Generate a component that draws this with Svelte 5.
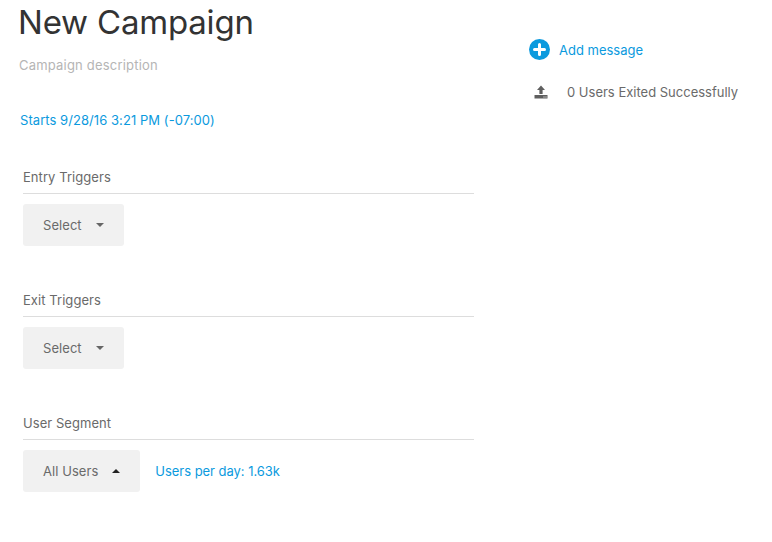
<script>
  let title = 'New Campaign';
  let sections = [
    { label: 'Entry Triggers', value: 'Select', open: false },
    { label: 'Exit Triggers', value: 'Select', open: false }
  ];
</script>

<div class="page">
  <div class="left">
    <h1 class="title">{title}</h1>
    <div class="description">Campaign description</div>
    <a class="starts" href="#top">Starts 9/28/16 3:21 PM (-07:00)</a>

    {#each sections as section}
      <section class="section">
        <div class="section-label">{section.label}</div>
        <div class="row">
          <button class="dropdown">
            {section.value}
            <span class="caret"></span>
          </button>
        </div>
      </section>
    {/each}

    <section class="section">
      <div class="section-label">User Segment</div>
      <div class="row">
        <button class="dropdown">
          All Users
          <span class="caret up"></span>
        </button>
        <a class="users-per-day" href="#top">Users per day: 1.63k</a>
      </div>
    </section>
  </div>

  <div class="right">
    <a class="add-message" href="#top">
      <svg width="21" height="21" viewBox="0 0 21 21">
        <circle cx="10.5" cy="10.5" r="10.5" fill="#0b9ade" />
        <path d="M10.5 5.5v10M5.5 10.5h10" stroke="#fff" stroke-width="3" stroke-linecap="round" />
      </svg>
      Add message
    </a>
    <div class="exited">
      <svg width="14" height="14" viewBox="0 0 14 14">
        <path d="M7 0.5 11 5H8.6v4H5.4V5H3z" fill="#5f5f5f" />
        <path d="M0.5 10h13v3.5H0.5z" fill="#5f5f5f" />
        <path d="M9.5 12h1M11.5 12h1" stroke="#fff" stroke-width="1" />
      </svg>
      <span>0 Users Exited Successfully</span>
    </div>
  </div>
</div>

<style>
  :global(body) {
    margin: 0;
    background: #fff;
  }

  .page {
    display: flex;
    width: 772px;
    height: 542px;
    overflow: hidden;
    font-family: Inter, "Liberation Sans", sans-serif;
    font-size: 13px;
    letter-spacing: 0.06px;
    color: #6a6a6a;
  }

  .left {
    width: 456px;
    padding-left: 18px;
    flex-shrink: 0;
  }

  .title {
    margin: 0;
    font-size: 33px;
    font-weight: 400;
    letter-spacing: -0.2px;
    line-height: 44px;
    color: #333;
  }

  .description {
    margin-top: 12px;
    margin-left: 1px;
    line-height: 18px;
    letter-spacing: 0.2px;
    color: #b5b5b5;
  }

  .starts {
    display: block;
    margin-top: 37px;
    margin-left: 2px;
    line-height: 18px;
    color: #0b9ade;
    text-decoration: none;
  }

  .section {
    margin-left: 5px;
    margin-top: 39px;
    height: 84px;
  }

  .section:first-of-type {
    margin-top: 37px;
  }

  .section-label {
    line-height: 18px;
    padding-top: 2px;
    box-sizing: border-box;
    border-bottom: 1px solid #ddd;
    height: 28px;
  }

  .row {
    display: flex;
    align-items: center;
    gap: 15px;
    margin-top: 10px;
  }

  .dropdown {
    display: flex;
    align-items: center;
    gap: 14px;
    height: 42px;
    padding: 0 20px;
    border: none;
    border-radius: 3px;
    background: #f1f1f1;
    font: inherit;
    letter-spacing: inherit;
    color: #6a6a6a;
  }

  .caret {
    width: 0;
    height: 0;
    border-left: 4px solid transparent;
    border-right: 4px solid transparent;
    border-top: 4px solid #666;
  }

  .caret.up {
    border-top: none;
    border-bottom: 4px solid #222;
  }

  .users-per-day {
    letter-spacing: -0.04px;
    color: #0b9ade;
    text-decoration: none;
  }

  .right {
    margin-left: 55px;
    padding-top: 39px;
  }

  .add-message {
    display: flex;
    align-items: center;
    gap: 9px;
    letter-spacing: 0;
    color: #0b9ade;
    text-decoration: none;
  }

  .exited {
    display: flex;
    align-items: center;
    gap: 19px;
    margin-top: 24px;
    margin-left: 5px;
    letter-spacing: 0;
  }
</style>
